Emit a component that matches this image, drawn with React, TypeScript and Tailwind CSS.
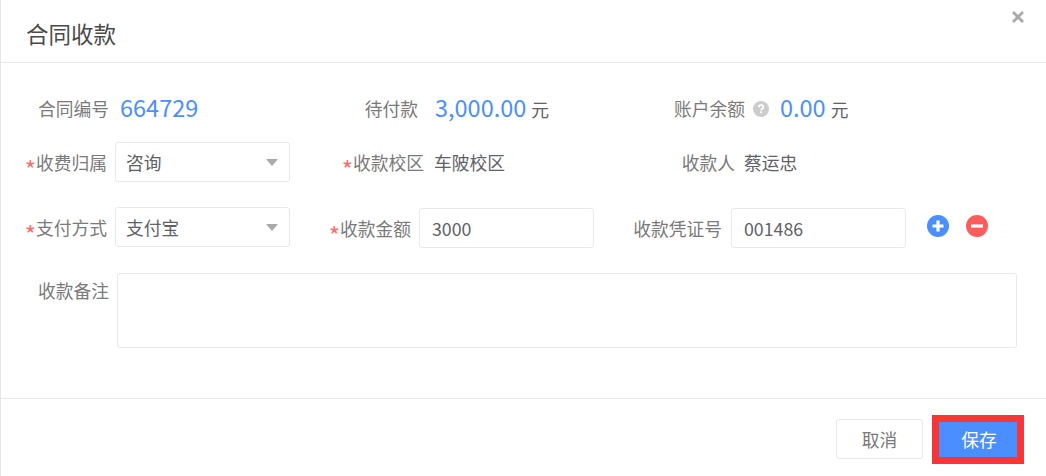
import React from "react";

const Star = () => <span className="text-[#ff6b6b] text-[24px] leading-none relative top-[9px]">*</span>;

function Label({ w, req, children }: { w: string; req?: boolean; children: React.ReactNode }) {
  return (
    <div className={`${w} shrink-0 text-right text-[#7a7a7a] text-[17.75px] whitespace-nowrap`}>
      {req && <Star />}
      {children}
    </div>
  );
}

function Select({ value }: { value: string }) {
  return (
    <div className="w-[175px] h-10 shrink-0 border border-[#e8e8e8] rounded-[3px] flex items-center justify-between pl-[10px] pr-[11px] text-[#606266] text-[17.75px]">
      <span>{value}</span>
      <svg width="12" height="7" viewBox="0 0 12 7">
        <path d="M0 0H12L6 7Z" fill="#aaaaaa" />
      </svg>
    </div>
  );
}

function Input({ value }: { value: string }) {
  return (
    <div className="w-[175px] h-10 shrink-0 border border-[#e8e8e8] rounded-[3px] flex items-center pl-3 text-[#606266] text-[17.75px] mt-px">
      {value}
    </div>
  );
}

export default function App() {
  return (
    <div
      className="w-[1046px] h-[476px] bg-white border-l border-l-[#e6e6e6] relative overflow-hidden flex flex-col"
      style={{ fontFamily: '"Noto Sans CJK SC", "Noto Sans", sans-serif' }}
    >
      <div className="h-[63px] shrink-0 border-b border-b-[#e8e8e8] pl-[25px] pt-[13px] text-[#4a4a4a] text-[22.5px] leading-[40px]">
        合同收款
      </div>
      <button className="absolute right-[22px] top-[11px] w-3 h-3">
        <svg width="12" height="12" viewBox="0 0 12 12" className="block">
          <path d="M1 1L11 11M11 1L1 11" stroke="#a9a9a9" strokeWidth="2.8" />
        </svg>
      </button>

      <div className="h-[335px] shrink-0 flex flex-col pt-[25px]">
        <div className="flex items-center h-10">
          <div className="flex items-center w-[309px]">
            <Label w="w-[108px]">合同编号</Label>
            <span className="ml-[11px] text-[#4b8eff] text-[23.5px]">664729</span>
          </div>
          <div className="flex items-center w-[327px]">
            <Label w="w-[108px]">待付款</Label>
            <span className="ml-[17px] text-[#4b8eff] text-[23.5px]">3,000.00</span>
            <span className="ml-[5px] text-[#606266] text-[17.75px] mt-[3px]">元</span>
          </div>
          <div className="flex items-center">
            <Label w="w-[108px]">账户余额</Label>
            <svg width="16" height="16" viewBox="0 0 16 16" className="ml-2 mt-px">
              <circle cx="8" cy="8" r="8" fill="#cccccc" />
              <path d="M5.6 6.3C5.6 4.9 6.7 4.1 8 4.1C9.4 4.1 10.4 4.9 10.4 6.1C10.4 7.7 8.1 7.7 8.1 9.3" fill="none" stroke="#fff" strokeWidth="1.8" />
              <rect x="7.1" y="10.4" width="2" height="1.9" fill="#fff" />
            </svg>
            <span className="ml-[11px] text-[#4b8eff] text-[23.5px]">0.00</span>
            <span className="ml-[5px] text-[#606266] text-[17.75px] mt-[3px]">元</span>
          </div>
        </div>

        <div className="flex items-center h-10 mt-[14px]">
          <Label w="w-[106px]" req>收费归属</Label>
          <div className="ml-2 w-[203px]"><Select value="咨询" /></div>
          <div className="flex items-center w-[327px]">
            <Label w="w-[106px]" req>收款校区</Label>
            <span className="ml-[10px] text-[#606266] text-[17.75px]">车陂校区</span>
          </div>
          <div className="flex items-center">
            <Label w="w-[90px]">收款人</Label>
            <span className="ml-[9px] text-[#606266] text-[17.75px]">蔡运忠</span>
          </div>
        </div>

        <div className="flex h-[41px] items-start mt-[25px]">
          <div className="h-10 flex items-center"><Label w="w-[106px]" req>支付方式</Label></div>
          <div className="ml-2 w-[191px]"><Select value="支付宝" /></div>
          <div className="h-[42px] flex items-center"><Label w="w-[105px]" req>收款金额</Label></div>
          <div className="ml-2"><Input value="3000" /></div>
          <div className="h-[42px] flex items-center"><Label w="w-[128px]">收款凭证号</Label></div>
          <div className="ml-[9px]"><Input value="001486" /></div>
          <div className="ml-[21px] mt-2 flex gap-[17px]">
            <svg width="22" height="22" viewBox="0 0 22 22">
              <circle cx="11" cy="11" r="11" fill="#4b8eff" />
              <path d="M11 5.5V16.5M5.5 11H16.5" stroke="#fff" strokeWidth="3.2" />
            </svg>
            <svg width="22" height="22" viewBox="0 0 22 22">
              <circle cx="11" cy="11" r="11" fill="#ff5c5c" />
              <path d="M5 11H17" stroke="#fff" strokeWidth="3.2" />
            </svg>
          </div>
        </div>

        <div className="flex items-start mt-[25px]">
          <div className="pt-[4px]"><Label w="w-[108px]">收款备注</Label></div>
          <div className="ml-2 w-[900px] h-[75px] border border-[#e8e8e8] rounded-[3px]" />
        </div>
      </div>

      <div className="flex-1 border-t border-t-[#e8e8e8] flex items-start justify-end pr-[22px] pt-[16px]">
        <div className="w-[87px] h-10 mt-1 border border-[#e8e8e8] rounded-[3px] flex items-center justify-center text-[#7a7a7a] text-[17.75px]">
          取消
        </div>
        <div className="ml-[9px] w-[92px] h-[49px] border-[7px] border-[#f93636] bg-[#4b8eff] flex items-center justify-center pl-[2px] text-white text-[17.75px]">
          保存
        </div>
      </div>
    </div>
  );
}
